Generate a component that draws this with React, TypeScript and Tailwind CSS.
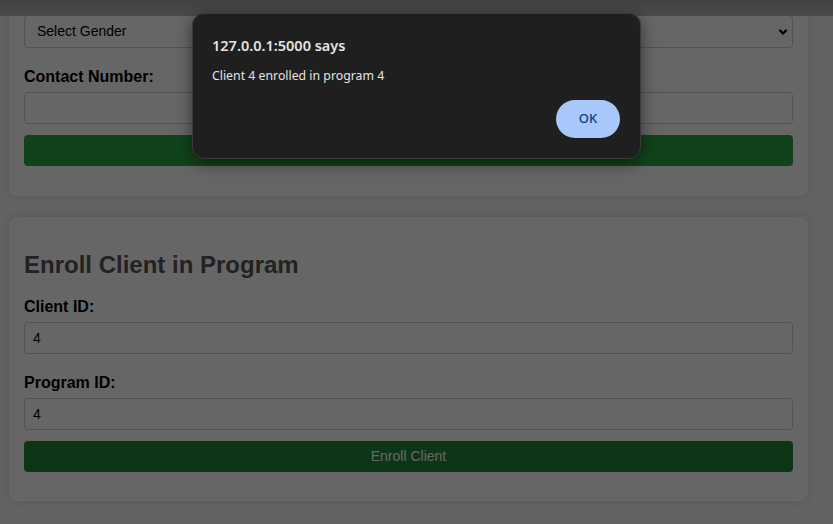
import React from "react";

function Label({ children }: { children: React.ReactNode }) {
  return (
    <label className="mt-[10px] mb-[6px] block text-[16px] leading-[18px] font-bold text-black">
      {children}
    </label>
  );
}

function Input({ value }: { value?: string }) {
  return (
    <div className="mb-[10px] flex h-[32px] w-full items-center rounded-[4px] border border-[#cccccc] bg-white px-[8px] text-[14px] text-black">
      {value}
    </div>
  );
}

function Card({ children, className }: { children: React.ReactNode; className?: string }) {
  return (
    <div
      className={`flex w-[799px] flex-col rounded-[8px] bg-white px-[15px] pt-[20px] shadow-[0_0_8px_rgba(0,0,0,0.1)] ${className ?? ""}`}
    >
      {children}
    </div>
  );
}

export default function App() {
  return (
    <div
      className="relative h-[524px] w-[833px] overflow-hidden bg-[#f4f4f4]"
      style={{ fontFamily: '"Liberation Sans", Arial, sans-serif' }}
    >
      <div className="flex flex-col gap-[21px] pl-[9px]">
        <Card className="-mt-[29px] pb-[30px]">
          <div className="mb-[6px] h-[18px]" />
          <div className="mb-[10px] flex h-[33px] w-full items-center justify-between rounded-[4px] border border-[#cccccc] bg-white pl-[12px] pr-[3px] text-[14px] text-black">
            <span>Select Gender</span>
            <svg width="12" height="12" viewBox="0 0 12 12">
              <path d="M3 4.5 L6 7.5 L9 4.5" fill="none" stroke="#000" strokeWidth="2.2" strokeLinecap="round" strokeLinejoin="round" />
            </svg>
          </div>
          <Label>Contact Number:</Label>
          <Input />
          <div className="mt-px flex h-[31px] w-full items-center justify-center rounded-[4px] bg-[#28a745] text-[14px] text-white">
            Register Client
          </div>
        </Card>
        <Card className="pb-[29px]">
          <h2 className="mt-[14px] mb-[10px] text-[24px] leading-[27px] font-bold text-[#555555]">
            Enroll Client in Program
          </h2>
          <Label>Client ID:</Label>
          <Input value="4" />
          <Label>Program ID:</Label>
          <Input value="4" />
          <div className="mt-px flex h-[31px] w-full items-center justify-center rounded-[4px] bg-[#218838] text-[14px] text-white">
            Enroll Client
          </div>
        </Card>
      </div>

      {/* dim overlay */}
      <div className="absolute inset-0 bg-black/60" />

      {/* top strip */}
      <div className="absolute top-0 left-0 h-[16px] w-full bg-gradient-to-b from-[#424242] to-[#4a4a4a]" />

      {/* alert dialog */}
      <div
        className="absolute top-[13px] left-[192px] h-[146px] w-[449px] rounded-[12px] border border-[#3a3a3a] bg-[#1f1f1f] shadow-[0_4px_16px_rgba(0,0,0,0.5)]"
        style={{ fontFamily: '"Noto Sans", "Open Sans", sans-serif' }}
      >
        <div className="px-[19px] pt-[21px]">
          <div className="text-[14.5px] leading-[20px] font-semibold text-[#e3e3e3]">127.0.0.1:5000 says</div>
          <div className="mt-[12px] text-[12.3px] leading-[18px] text-[#e3e3e3]">Client 4 enrolled in program 4</div>
        </div>
        <div className="absolute right-[20px] bottom-[20px] flex h-[38px] w-[64px] items-center justify-center rounded-full bg-[#a8c7fa] text-[13px] font-medium text-[#0b3d8c]">
          OK
        </div>
      </div>
    </div>
  );
}
